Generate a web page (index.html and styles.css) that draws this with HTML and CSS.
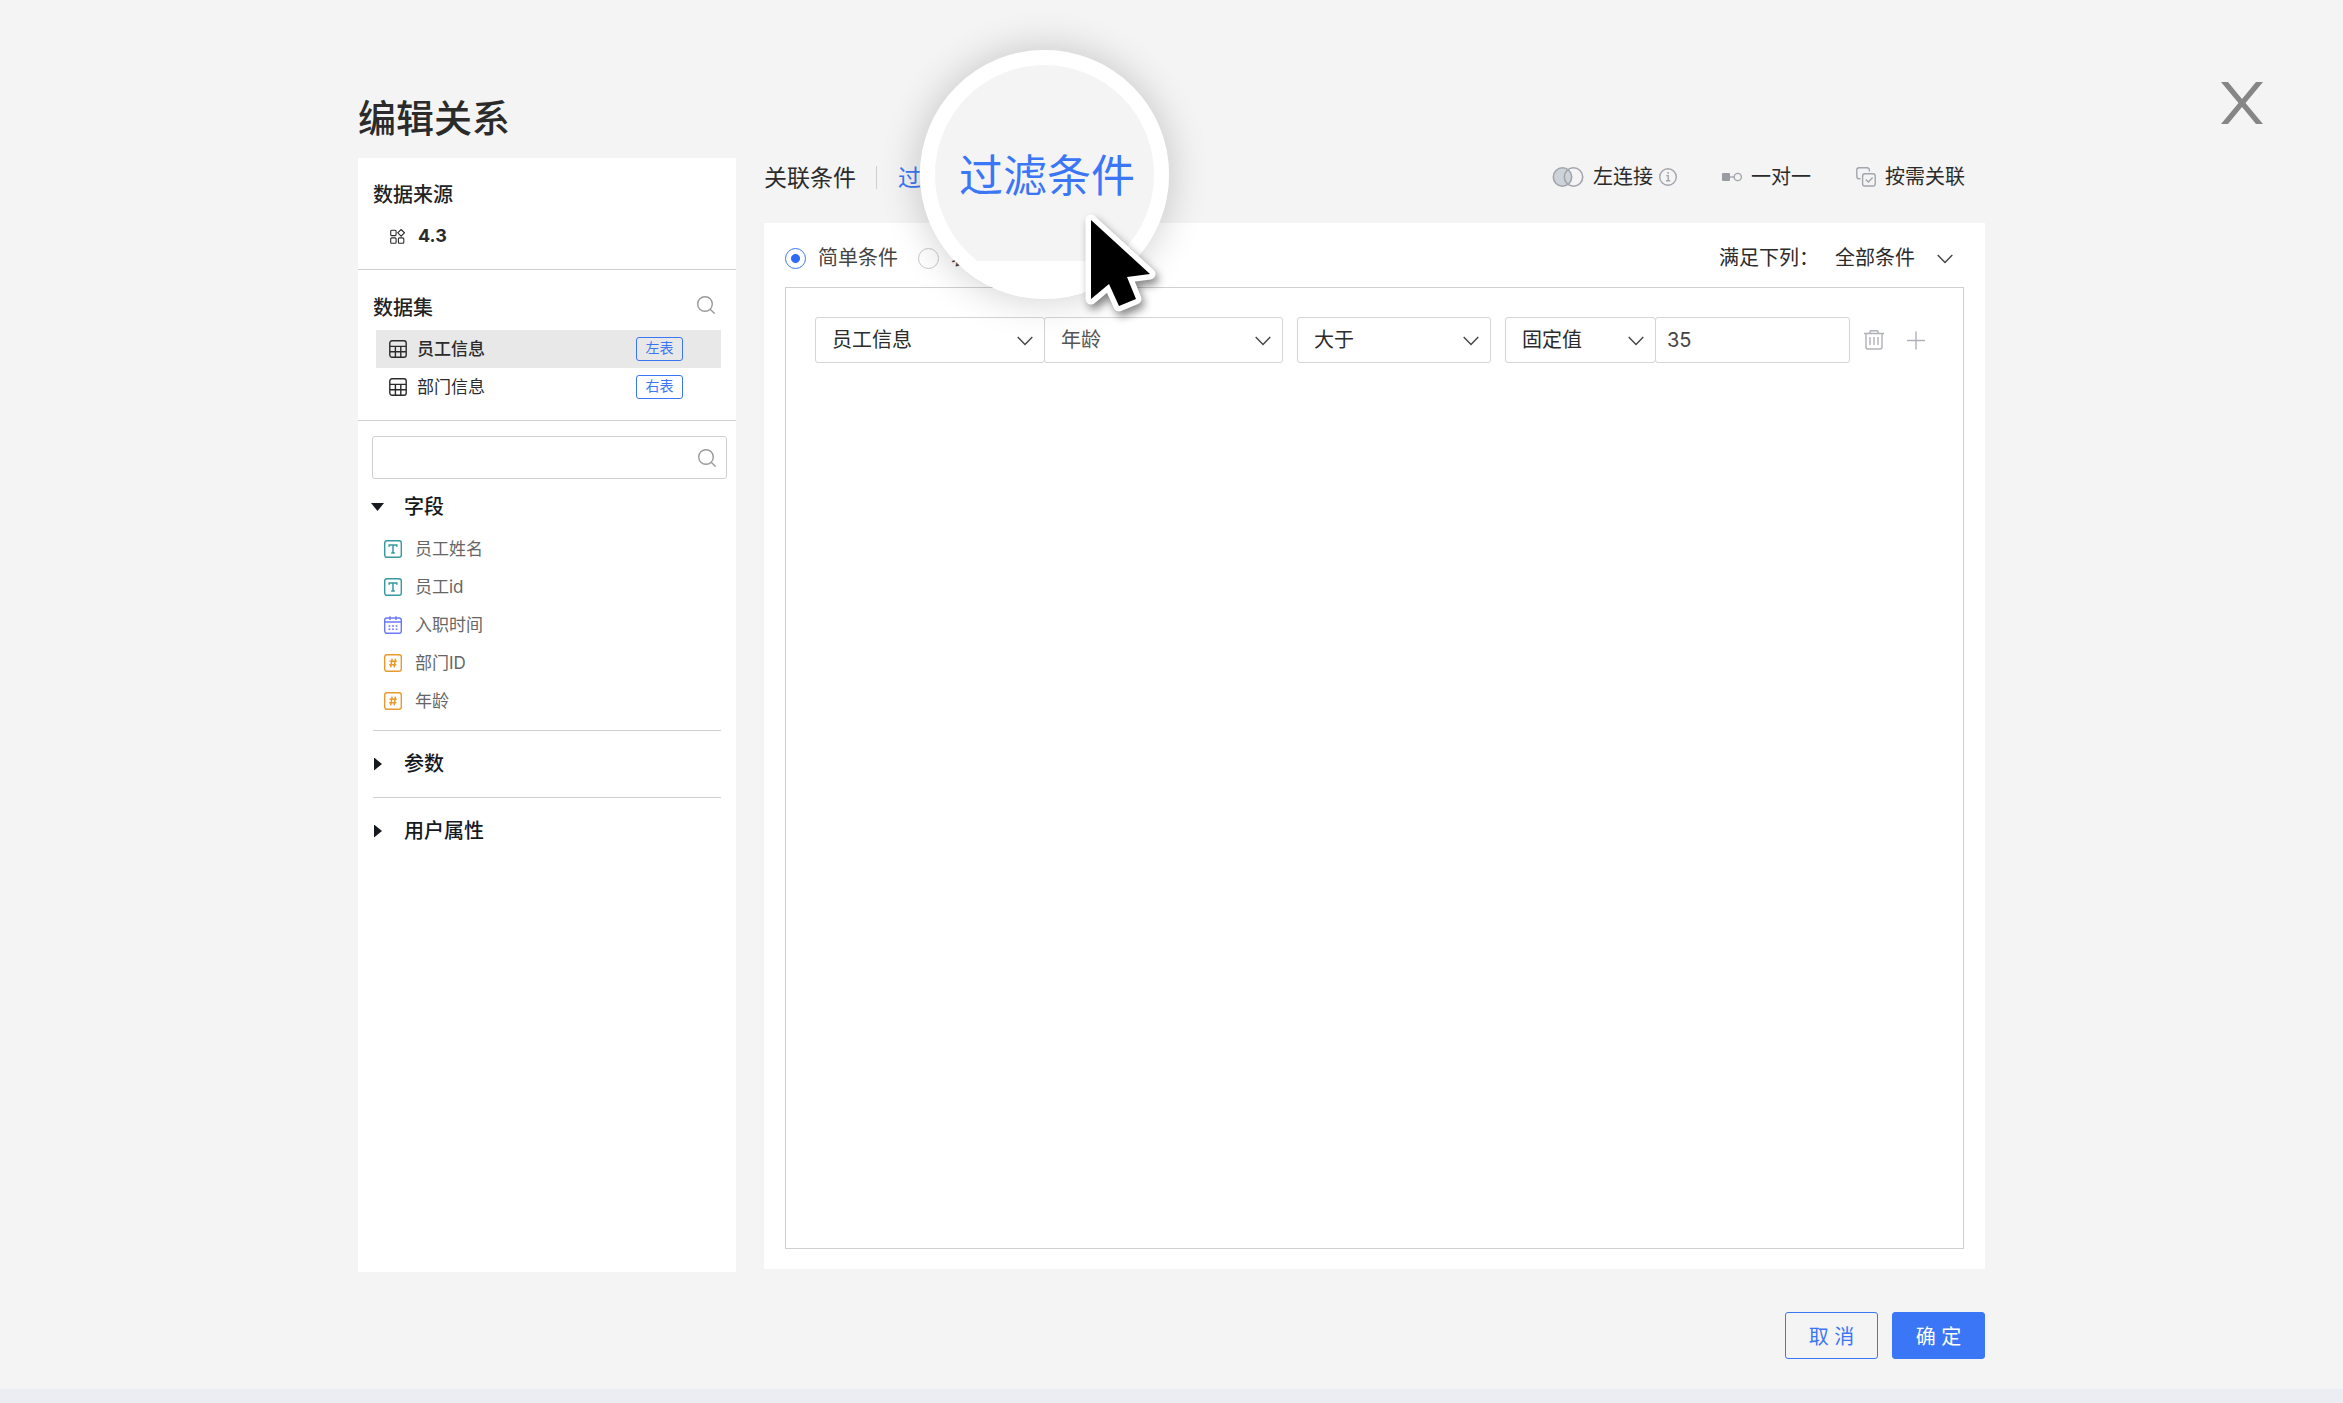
FILE: index.html
```html
<!DOCTYPE html>
<html lang="zh-CN">
<head>
<meta charset="utf-8">
<title>编辑关系</title>
<link rel="stylesheet" href="styles.css">
</head>
<body>
<svg class="defs" aria-hidden="true">
  <symbol id="search" viewBox="0 0 18 18"><circle cx="8" cy="8" r="7.3"/><path d="M13.2 13.2 17.6 17.6"/></symbol>
  <symbol id="table" viewBox="0 0 18 18"><rect x=".8" y=".8" width="16.4" height="16.4" rx="2.2"/><path d="M1 6.4H17M1 11.8H17M6.4 6.4V17M11.8 6.4V17"/></symbol>
  <symbol id="text" viewBox="0 0 18 18"><rect x=".7" y=".7" width="16.6" height="16.6" rx="2.2"/><path d="M5.2 6.8V5H12.8V6.8M9 5V13M7.2 13H10.8" stroke-width="1.5"/></symbol>
  <symbol id="date" viewBox="0 0 18 18"><rect x=".7" y="2" width="16.6" height="15.3" rx="2.2"/><path d="M.7 6H17.3M6 .3V4M12 .3V4M4.5 10H6.3M8.1 10H9.9M11.7 10H13.5M4.5 13.2H6.3M8.1 13.2H9.9M11.7 13.2H13.5"/></symbol>
  <symbol id="number" viewBox="0 0 18 18"><rect x=".7" y=".7" width="16.6" height="16.6" rx="2.2"/><path d="M8.1 4.6 6.7 13.4M11.5 4.6 10.1 13.4M5.6 7.3H12.8M5.2 10.7H12.4" stroke-width="1.5"/></symbol>
  <symbol id="chevron" viewBox="0 0 16 10"><path d="M.7 1 8 8.6 15.3 1"/></symbol>
</svg>

<div class="page">
  <button class="close" type="button" aria-label="关闭">
    <svg viewBox="0 0 42 42"><path d="M0 0H7L21 17 35 0H42L24.5 21 42 42H35L21 25 7 42H0L17.500 21Z"/></svg>
  </button>

  <div class="dialog">
    <div class="layout">
      <div class="side">
        <h1 class="title">编辑关系</h1>
        <aside class="sidebar">
          <section class="source">
            <h2 class="heading">数据来源</h2>
            <div class="source-name">
              <svg class="ico-source" viewBox="0 0 15 15"><rect x=".7" y="1.200" width="5.400" height="5.400" rx="1"/><rect x=".7" y="8.900" width="5.400" height="5.400" rx="1"/><rect x="8.400" y="8.900" width="5.400" height="5.400" rx="1"/><path d="M11.100.5 14.400 3.800 11.100 7.100 7.800 3.800Z"/></svg>
              <span>4.3</span>
            </div>
          </section>
          <section class="datasets">
            <div class="datasets-head">
              <h2 class="heading">数据集</h2>
              <button class="icon-btn" type="button" aria-label="搜索数据集"><svg class="ico search"><use href="#search"/></svg></button>
            </div>
            <ul class="dataset-list">
              <li class="dataset active"><svg class="ico"><use href="#table"/></svg><span class="name">员工信息</span><span class="tag">左表</span></li>
              <li class="dataset"><svg class="ico"><use href="#table"/></svg><span class="name">部门信息</span><span class="tag">右表</span></li>
            </ul>
          </section>
          <section class="fields">
            <label class="search-box">
              <input type="text" aria-label="搜索字段">
              <svg class="ico search"><use href="#search"/></svg>
            </label>
            <button class="group open" type="button"><i class="caret"></i>字段</button>
            <ul class="field-list">
              <li class="field"><svg class="ico teal"><use href="#text"/></svg>员工姓名</li>
              <li class="field"><svg class="ico teal"><use href="#text"/></svg>员工id</li>
              <li class="field"><svg class="ico violet"><use href="#date"/></svg>入职时间</li>
              <li class="field"><svg class="ico orange"><use href="#number"/></svg>部门ID</li>
              <li class="field"><svg class="ico orange"><use href="#number"/></svg>年龄</li>
            </ul>
            <button class="group ruled" type="button"><i class="caret"></i>参数</button>
            <button class="group ruled" type="button"><i class="caret"></i>用户属性</button>
          </section>
        </aside>
      </div>

      <main class="main">
        <div class="topbar">
          <nav class="tabs">
            <a class="tab" href="#join">关联条件</a>
            <a class="tab current" href="#filter">过滤条件</a>
          </nav>
          <div class="options">
            <button class="option" type="button">
              <svg class="ico-venn" viewBox="0 0 32 20"><circle cx="10.500" cy="10" r="9.200" fill="#cdd3d8"/><circle cx="21.500" cy="10" r="9.200"/></svg>
              左连接
              <svg class="ico-info" viewBox="0 0 18 18"><circle cx="9" cy="9" r="8.300"/><path d="M7.300 7.600H9.200V12.800M7 12.800H11.300"/><path d="M8.300 4.800H9.900" stroke-width="1.800"/></svg>
            </button>
            <button class="option" type="button">
              <svg class="ico-one" viewBox="0 0 20 10"><rect x="0" y="1" width="8" height="8" rx="1" fill="#9a9ca3" stroke="none"/><path d="M8 5H12"/><circle cx="15.800" cy="5" r="3.600"/></svg>
              一对一
            </button>
            <button class="option" type="button">
              <svg class="ico-link" viewBox="0 0 20 20"><path d="M4.500 11.800H3A2.200 2.200 0 0 1 .8 9.600V3A2.200 2.200 0 0 1 3 .8H11.200A2.200 2.200 0 0 1 13.400 3V4.600"/><rect x="6.600" y="6.800" width="12.600" height="12.200" rx="2.200"/><path d="M9.800 12.400 12.400 14.900 16.600 10.600"/></svg>
              按需关联
            </button>
          </div>
        </div>

        <section class="panel">
          <div class="mode">
            <label class="choice"><input type="radio" name="mode" checked>简单条件</label>
            <label class="choice"><input type="radio" name="mode">表达式</label>
            <div class="match">
              <label for="match">满足下列：</label>
              <span class="select match-select"><select id="match"><option>全部条件</option></select><svg class="chev"><use href="#chevron"/></svg></span>
            </div>
          </div>
          <div class="conditions">
            <div class="condition">
              <div class="joined">
                <span class="select box w-table"><select aria-label="数据集"><option>员工信息</option></select><svg class="chev"><use href="#chevron"/></svg></span>
                <span class="select box w-field"><select aria-label="字段"><option>年龄</option></select><svg class="chev"><use href="#chevron"/></svg></span>
              </div>
              <span class="select box w-op"><select aria-label="运算符"><option>大于</option></select><svg class="chev"><use href="#chevron"/></svg></span>
              <div class="joined">
                <span class="select box w-kind"><select aria-label="值类型"><option>固定值</option></select><svg class="chev"><use href="#chevron"/></svg></span>
                <input class="box w-value" type="text" value="35" aria-label="值">
              </div>
              <div class="actions">
                <button class="icon-btn" type="button" aria-label="删除"><svg class="ico-act" viewBox="0 0 20 20"><path d="M0 3.500H20M5.500 3.500 6.500.8H13.500L14.500 3.500M2 3.500V17A2 2 0 0 0 4 19H16A2 2 0 0 0 18 17V3.500M6 7V15M10 7V15M14 7V15"/></svg></button>
                <button class="icon-btn" type="button" aria-label="添加"><svg class="ico-act" viewBox="0 0 20 20"><path d="M1 10.500H19M10 1.500V19.500"/></svg></button>
              </div>
            </div>
          </div>
        </section>
      </main>
    </div>

    <footer class="footer">
      <button class="btn" type="button">取 消</button>
      <button class="btn primary" type="button">确 定</button>
    </footer>
  </div>

  <div class="lens" aria-hidden="true"><span>过滤条件</span></div>
  <svg class="pointer" viewBox="0 0 90 114" aria-hidden="true"><path d="M11 9V88L29 73 39 95 56 88 47 66 70 63Z"/></svg>
</div>
<div class="strip"></div>
</body>
</html>
```
FILE: styles.css
```css
* { box-sizing: border-box; }

body {
  margin: 0;
  min-height: 100vh;
  display: flex;
  flex-direction: column;
  background: #f4f4f4;
  color: #2b2b2b;
  font: 20px/30px Inter, "Noto Sans CJK SC", sans-serif;
}

button, input, select { font: inherit; color: inherit; }
button { margin: 0; padding: 0; border: 0; background: none; text-align: left; }
ul { list-style: none; margin: 0; padding: 0; }
h1, h2 { margin: 0; }
svg { display: block; flex: none; fill: none; stroke: currentColor; stroke-width: 1.4; }
.defs { position: absolute; width: 0; height: 0; }

.page {
  position: relative;
  flex: 1;
  display: flex;
  flex-direction: column;
}

.strip { height: 14px; background: #ecedf3; }

.close {
  position: absolute;
  top: 82px;
  right: 80px;
}
.close svg { width: 42px; height: 42px; fill: #868686; stroke: none; }

.dialog {
  flex: 1;
  width: 100%;
  max-width: 1627px;
  margin: 0 auto;
  padding: 90px 0 30px;
  display: flex;
  flex-direction: column;
}

.layout { flex: 1; display: flex; gap: 28px; }

.side { width: 378px; display: flex; flex-direction: column; }
.title { height: 68px; font-size: 38px; line-height: 56px; font-weight: 500; }
.sidebar { flex: 1; background: #fff; }
.heading { font-size: 20px; line-height: 30px; font-weight: 500; color: #222; }

.source { height: 111px; padding: 22px 15px 0; }
.source-name {
  display: flex;
  align-items: center;
  gap: 13px;
  margin-top: 11px;
  padding-left: 17px;
  font-size: 18px;
  font-weight: 700;
}
.ico-source { width: 15px; height: 15px; stroke-width: 1.1; }

.datasets { height: 151px; border-top: 1px solid #d0d0d0; padding: 23px 15px 0; }
.datasets-head { display: flex; justify-content: space-between; align-items: flex-start; padding-right: 6px; }
.ico { width: 18px; height: 18px; }
.search { color: #999; }
.datasets-head .ico { margin-top: 3px; }
.dataset-list { margin: 7px 0 0 3px; }
.dataset {
  height: 38px;
  padding: 0 38px 0 13px;
  display: flex;
  align-items: center;
  gap: 10px;
  font-size: 17px;
}
.dataset.active { background: #e8e8e8; font-weight: 500; }
.tag {
  width: 47px;
  height: 24px;
  margin-left: auto;
  border: 1px solid #3b76f6;
  border-radius: 3px;
  color: #3b76f6;
  font-size: 14px;
  line-height: 20px;
  font-weight: 400;
  text-align: center;
}

.fields { border-top: 1px solid #d0d0d0; padding: 15px 15px 0; }
.search-box {
  height: 43px;
  margin: 0 -6px 0 -1px;
  padding: 0 10px;
  display: flex;
  align-items: center;
  border: 1px solid #d0d0d0;
  border-radius: 3px;
}
.search-box input { flex: 1; min-width: 0; border: 0; outline: 0; background: none; }

.group {
  width: 100%;
  display: flex;
  align-items: center;
  font-weight: 500;
  color: #16191d;
}
.caret {
  width: 31px;
  padding-left: 1px;
}
.caret::before {
  content: "";
  display: block;
  width: 8px;
  height: 13px;
  background: currentColor;
  clip-path: polygon(0 0, 100% 50%, 0 100%);
}
.open .caret { padding: 0; }
.open .caret::before {
  width: 13px;
  height: 8px;
  margin-left: -2px;
  clip-path: polygon(0 0, 100% 0, 50% 100%);
}
.group.ruled { height: 67px; width: 348px; border-top: 1px solid #d0d0d0; }
.group.open { height: 46px; margin-top: 5px; }
.field-list { padding-bottom: 10px; }
.field {
  height: 38px;
  padding-left: 11px;
  display: flex;
  align-items: center;
  gap: 13px;
  font-size: 17px;
  color: #666;
}
.teal { color: #36999f; }
.violet { color: #6c78f5; }
.orange { color: #e99a2c; }

.main { flex: 1; min-width: 0; padding-bottom: 3px; display: flex; flex-direction: column; }
.topbar {
  height: 133px;
  padding: 71px 20px 0 0;
  display: flex;
  justify-content: space-between;
  align-items: flex-start;
}
.tabs { display: flex; font-size: 23px; line-height: 34px; }
.tab { color: inherit; text-decoration: none; }
.tab + .tab { position: relative; padding-left: 42px; }
.tab + .tab::before {
  content: "";
  position: absolute;
  left: 20px;
  top: 5px;
  height: 23px;
  border-left: 1px solid #d0d0d0;
}
.tab.current { color: #3b76f6; }
.options { display: flex; gap: 45px; }
.option { height: 32px; display: flex; align-items: center; gap: 9px; }
.option svg { color: #a3a5ac; }
.ico-venn { width: 32px; height: 20px; stroke-width: 1.6; }
.ico-info { width: 18px; height: 18px; margin-left: -3px; }
.ico-one { width: 20px; height: 10px; }
.ico-link { width: 20px; height: 20px; }

.panel {
  flex: 1;
  padding: 21px 21px 20px;
  background: #fff;
  display: flex;
  flex-direction: column;
}
.mode { height: 43px; padding-bottom: 15px; display: flex; align-items: center; gap: 20px; }
.choice { display: flex; align-items: center; gap: 12px; color: #444; }
.choice input {
  appearance: none;
  width: 21px;
  height: 21px;
  margin: 0;
  border: 1px solid #c8c8c8;
  border-radius: 50%;
}
.choice input:checked {
  border-color: #3b76f6;
  background: radial-gradient(circle, #2f6cf6 4px, transparent 5px);
}
.match { margin-left: auto; display: flex; align-items: center; gap: 16px; }

.select { position: relative; display: block; }
.select select {
  appearance: none;
  width: 100%;
  height: 100%;
  border: 0;
  outline: 0;
  background: none;
  padding: 0 40px 0 16px;
}
.chev {
  position: absolute;
  right: 11px;
  top: 50%;
  width: 16px;
  height: 10px;
  margin-top: -4px;
  color: #444;
  pointer-events: none;
}
.match-select { width: 129px; height: 30px; }
.match-select select { padding: 0; }

.conditions { flex: 1; border: 1px solid #d0d0d0; padding: 29px; }
.condition { display: flex; gap: 14px; }
.joined { display: flex; }
.box {
  height: 46px;
  border: 1px solid #d4d4d4;
  border-radius: 3px;
  background: #fff;
}
.joined .box + .box { margin-left: -1px; }
.w-table { width: 230px; }
.w-field { width: 239px; color: #555; }
.w-op { width: 194px; }
.w-kind { width: 151px; }
.w-value { width: 195px; padding: 0 11px; color: #444; outline: 0; }
.actions { display: flex; align-items: center; gap: 22px; color: #b0b2b8; }
.ico-act { width: 20px; height: 20px; }

.footer { display: flex; justify-content: flex-end; gap: 14px; padding-top: 40px; }
.btn {
  width: 93px;
  height: 47px;
  padding-top: 2px;
  border: 1px solid #3b76f6;
  border-radius: 3px;
  color: #3b76f6;
  text-align: center;
}
.btn.primary { background: #3b76f6; color: #fff; }

/* Magnifier that lies over the current tab */
.lens {
  position: absolute;
  left: calc(50% - 252px);
  top: 50px;
  width: 249px;
  height: 249px;
  padding: 3px 0 0 6px;
  border: 15px solid #fff;
  border-radius: 50%;
  background: linear-gradient(#f4f4f4 196px, #fff 196px);
  box-shadow: 0 0 40px rgba(0, 0, 0, .2);
  display: flex;
  align-items: center;
  justify-content: center;
  color: #3b76f6;
  font-size: 44px;
}
.pointer {
  position: absolute;
  left: calc(50% - 92px);
  top: 211px;
  width: 90px;
  height: 114px;
  overflow: visible;
  filter: drop-shadow(3px 5px 4px rgba(0, 0, 0, .45));
}
.pointer path {
  fill: #000;
  stroke: #fff;
  stroke-width: 11;
  stroke-linejoin: round;
  paint-order: stroke;
}
```
